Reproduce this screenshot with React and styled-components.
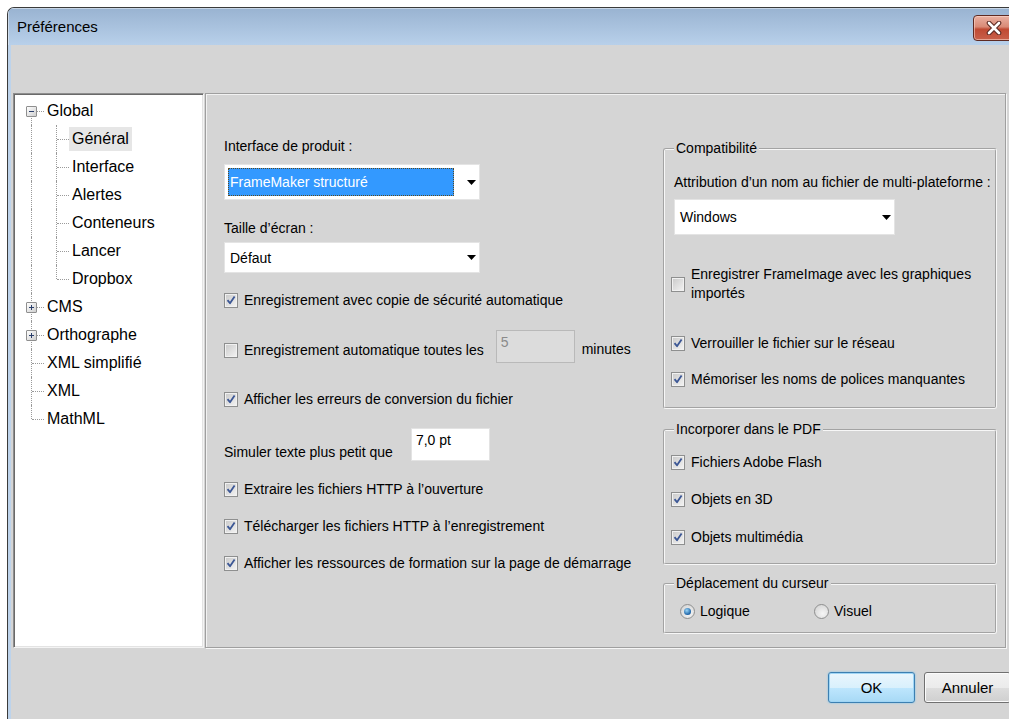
import React from 'react';
import styled, { createGlobalStyle, css } from 'styled-components';

const GlobalStyle = createGlobalStyle`
  html, body {
    margin: 0;
    padding: 0;
    background: #ffffff;
    overflow: hidden;
  }
  body {
    font-family: "Liberation Sans", Arial, sans-serif;
    font-size: 14px;
    color: #000;
  }
`;

const Screen = styled.div`
  width: 1009px;
  height: 719px;
  padding: 7px 0 0 7px;
  box-sizing: border-box;
  overflow: hidden;
`;

const Window = styled.div`
  width: 1016px;
  height: 740px;
  box-sizing: border-box;
  border-top: 1px solid #3b3b3b;
  border-left: 1px solid #3b3b3b;
  border-radius: 7px 0 0 0;
  background: #bdd3eb;
  display: flex;
  flex-direction: column;
  overflow: hidden;
`;

const TitleBar = styled.div`
  height: 37px;
  flex-shrink: 0;
  display: flex;
  align-items: center;
  padding-left: 9px;
  background: linear-gradient(#99b3d1, #b8d0ea);
  box-shadow: inset 1px 1px 0 rgba(255, 255, 255, 0.45);
`;

const Title = styled.div`
  flex: 1;
  font-size: 15px;
  line-height: 18px;
  margin-top: 1px;
  color: #000;
`;

const CloseButton = styled.div`
  width: 42px;
  height: 26px;
  margin: 2px 8px 0 0;
  box-sizing: border-box;
  border: 1px solid #5e2a22;
  border-radius: 4px;
  background: linear-gradient(#eab1a2 0%, #d98a76 45%, #c04a33 55%, #c8604a 100%);
  box-shadow: inset 0 0 0 1px rgba(255, 220, 210, 0.55);
  display: flex;
  align-items: center;
  justify-content: center;
`;

const Client = styled.div`
  flex: 1;
  margin-left: 3px;
  background: #d5d5d5;
  padding: 48px 0 0 2px;
`;

const Content = styled.div`
  width: 998px;
  display: flex;
  flex-direction: column;
`;

const PanelRow = styled.div`
  display: flex;
  gap: 1px;
  height: 555px;
`;

/* ---------- tree ---------- */

const TreePane = styled.div`
  width: 191px;
  box-sizing: border-box;
  background: #fff;
  border: 1px solid;
  border-color: #8e8e8e #f4f4f4 #f4f4f4 #8e8e8e;
  box-shadow: inset 1px 1px 0 #6a6a6a, inset -1px -1px 0 #e3e3e3;
  padding: 3px 0 0 5px;
`;

const TreeRow = styled.div`
  display: flex;
  align-items: center;
  height: 28px;
`;

const Guide = styled.span`
  position: relative;
  width: 25px;
  height: 28px;
  flex-shrink: 0;

  &::before {
    content: '';
    position: absolute;
    left: 12px;
    border-left: 1px dotted #9a9a9a;
    top: ${(p) => (p.$line === 'first' ? '14px' : '0')};
    bottom: ${(p) => (p.$line === 'last' ? '14px' : '0')};
  }

  ${(p) =>
    p.$line !== 'pass' &&
    css`
      &::after {
        content: '';
        position: absolute;
        left: 13px;
        right: 0;
        top: 14px;
        border-top: 1px dotted #9a9a9a;
      }
    `}
`;

const Toggle = styled.span`
  position: absolute;
  left: 7px;
  top: 9px;
  width: 11px;
  height: 11px;
  box-sizing: border-box;
  border: 1px solid #8f8f8f;
  border-radius: 1px;
  background: linear-gradient(135deg, #ffffff, #cfcfcf);
  z-index: 1;
  display: flex;
  align-items: center;
  justify-content: center;
`;

const TreeLabel = styled.span`
  font-size: 16px;
  height: 24px;
  line-height: 24px;
  padding: 0 3px;
  white-space: nowrap;
  background: ${(p) => (p.$selected ? '#e6e6e6' : 'transparent')};
`;

/* ---------- settings panel ---------- */

const SettingsPane = styled.div`
  width: 801px;
  box-sizing: border-box;
  border: 1px solid #9f9f9f;
  box-shadow: inset 1px 1px 0 #f2f2f2, 1px 1px 0 #f6f6f6;
  display: flex;
  padding: 43px 8px 0 18px;
`;

const LeftColumn = styled.div`
  flex: 1;
  display: flex;
  flex-direction: column;
  align-items: flex-start;
`;

const RightColumn = styled.div`
  width: 334px;
  padding-top: 3px;
  display: flex;
  flex-direction: column;
`;

const Text = styled.div`
  line-height: 18px;
  white-space: nowrap;
  margin-top: ${(p) => p.$mt || 0}px;
  margin-left: ${(p) => p.$ml || 0}px;
`;

const Combo = styled.div`
  width: ${(p) => p.$w}px;
  height: ${(p) => p.$h}px;
  margin-top: ${(p) => p.$mt || 0}px;
  margin-left: ${(p) => p.$ml || 0}px;
  box-sizing: border-box;
  background: #fff;
  border: 1px solid #e4e4e4;
  padding: 3px 0 3px 3px;
  display: flex;
  align-items: stretch;
`;

const ComboValue = styled.div`
  flex: 1;
  margin-right: 9px;
  padding-left: 2px;
  display: flex;
  align-items: center;
  box-sizing: border-box;
  ${(p) =>
    p.$active &&
    css`
      background: #3399ff;
      color: #fff;
      outline: 1px dotted #5a4a20;
      outline-offset: -1px;
    `}
`;

const ComboArrow = styled.div`
  width: 16px;
  display: flex;
  align-items: center;
  justify-content: center;
`;

const CheckRow = styled.div`
  display: flex;
  align-items: center;
  min-height: 24px;
  margin-top: ${(p) => p.$mt || 0}px;
  margin-left: ${(p) => p.$ml || 0}px;
`;

const Box = styled.span`
  width: 14px;
  height: 15px;
  flex-shrink: 0;
  box-sizing: border-box;
  border: 1px solid #8e8f8f;
  background: linear-gradient(135deg, #c9c9c9, #f4f4f4);
  box-shadow: inset 0 0 0 1px #f1f1f1;
  display: flex;
  align-items: center;
  justify-content: center;
  margin-right: 6px;
`;

const CheckText = styled.span`
  line-height: 19px;
  white-space: ${(p) => (p.$wrap ? 'normal' : 'nowrap')};
  width: ${(p) => (p.$wrap ? `${p.$wrap}px` : 'auto')};
`;

const FieldBox = styled.div`
  width: ${(p) => p.$w}px;
  height: 33px;
  box-sizing: border-box;
  margin-left: ${(p) => p.$ml || 0}px;
  border: 1px solid ${(p) => (p.$disabled ? '#b9b9b9' : '#e3e3e3')};
  background: ${(p) => (p.$disabled ? '#dcdcdc' : '#fff')};
  color: ${(p) => (p.$disabled ? '#8a8a8a' : '#000')};
  padding: 2px 4px;
  line-height: 18px;
  align-self: flex-start;
  margin-top: ${(p) => p.$mt || 0}px;
`;

const SimRow = styled.div`
  display: flex;
  align-items: flex-end;
  margin-top: ${(p) => p.$mt || 0}px;
`;

const Group = styled.fieldset`
  margin: ${(p) => p.$mt || 0}px 0 0 0;
  padding: 0 9px ${(p) => p.$pb || 0}px 9px;
  min-width: 0;
  border: 2px groove #f7f7f7;
  border-radius: 3px;
  display: flex;
  flex-direction: column;
  align-items: flex-start;
`;

const Legend = styled.legend`
  padding: 0 2px;
  line-height: 17px;
  white-space: nowrap;
`;

const RadioRow = styled.div`
  display: flex;
  align-items: center;
  height: 24px;
  margin: ${(p) => p.$mt || 0}px 0 0 6px;
`;

const RadioOption = styled.label`
  display: flex;
  align-items: center;
  width: ${(p) => p.$w || 'auto'};
`;

const RadioDot = styled.span`
  width: 15px;
  height: 15px;
  box-sizing: border-box;
  border-radius: 50%;
  border: 1px solid #8e8f8f;
  background: radial-gradient(circle at 60% 65%, #f6f6f6, #cfcfcf);
  display: flex;
  align-items: center;
  justify-content: center;
  margin-right: 5px;

  ${(p) =>
    p.$on &&
    css`
      &::after {
        content: '';
        width: 7px;
        height: 7px;
        border-radius: 50%;
        background: radial-gradient(circle at 40% 35%, #9ad6f8, #1b62a6 70%, #1a4b7c);
      }
    `}
`;

/* ---------- footer ---------- */

const Footer = styled.div`
  display: flex;
  justify-content: flex-end;
  gap: 9px;
  margin-top: 24px;
`;

const Button = styled.div`
  width: 87px;
  height: 31px;
  box-sizing: border-box;
  border-radius: 3px;
  display: flex;
  align-items: center;
  justify-content: center;
  font-size: 15px;
  ${(p) =>
    p.$primary
      ? css`
          border: 1px solid #3c7fb1;
          background: linear-gradient(#eaf6fd 0%, #d9f0fc 50%, #bee6fd 51%, #a7d9f5 100%);
          box-shadow: inset 0 0 0 1px #9fd5f5, 0 0 2px #6cc1f2;
        `
      : css`
          border: 1px solid #707070;
          background: linear-gradient(#f2f2f2 0%, #ebebeb 50%, #dddddd 51%, #cfcfcf 100%);
          box-shadow: inset 0 0 0 1px #fbfbfb;
        `}
`;

/* ---------- small drawings ---------- */

const CheckMark = () => (
  <svg width="10" height="10" viewBox="0 0 10 10">
    <path d="M1.5 5.2 L4 8.2 L8.6 1.4" fill="none" stroke="#3c5795" strokeWidth="1.8" strokeLinejoin="round" />
  </svg>
);

const DownArrow = () => (
  <svg width="9" height="5" viewBox="0 0 9 5">
    <path d="M0 0 H9 L4.5 5 Z" fill="#000" />
  </svg>
);

const CloseGlyph = () => (
  <svg width="16" height="14" viewBox="0 0 16 14">
    <path d="M3 2 L13 12 M13 2 L3 12" stroke="#5b2a22" strokeWidth="4.6" strokeLinecap="round" />
    <path d="M3 2 L13 12 M13 2 L3 12" stroke="#ffffff" strokeWidth="2.6" strokeLinecap="round" />
  </svg>
);

const ToggleGlyph = ({ plus }) => (
  <svg width="7" height="7" viewBox="0 0 7 7">
    <path d="M1 3.5 H6" stroke="#2b3f6b" strokeWidth="1" />
    {plus && <path d="M3.5 1 V6" stroke="#2b3f6b" strokeWidth="1" />}
  </svg>
);

const Checkbox = ({ checked, children, wrap, mt, ml }) => (
  <CheckRow $mt={mt} $ml={ml}>
    <Box>{checked && <CheckMark />}</Box>
    <CheckText $wrap={wrap}>{children}</CheckText>
  </CheckRow>
);

/* ---------- data ---------- */

const treeItems = [
  { label: 'Global', guides: ['first'], toggle: 'minus' },
  { label: 'Général', guides: ['pass', 'mid'], selected: true },
  { label: 'Interface', guides: ['pass', 'mid'] },
  { label: 'Alertes', guides: ['pass', 'mid'] },
  { label: 'Conteneurs', guides: ['pass', 'mid'] },
  { label: 'Lancer', guides: ['pass', 'mid'] },
  { label: 'Dropbox', guides: ['pass', 'last'] },
  { label: 'CMS', guides: ['mid'], toggle: 'plus' },
  { label: 'Orthographe', guides: ['mid'], toggle: 'plus' },
  { label: 'XML simplifié', guides: ['mid'] },
  { label: 'XML', guides: ['mid'] },
  { label: 'MathML', guides: ['last'] },
];

export default function App() {
  return (
    <>
      <GlobalStyle />
      <Screen>
        <Window>
          <TitleBar>
            <Title>Préférences</Title>
            <CloseButton>
              <CloseGlyph />
            </CloseButton>
          </TitleBar>
          <Client>
            <Content>
              <PanelRow>
                <TreePane>
                  {treeItems.map((item) => (
                    <TreeRow key={item.label}>
                      {item.guides.map((g, i) => (
                        <Guide key={i} $line={g}>
                          {item.toggle && i === item.guides.length - 1 && (
                            <Toggle>
                              <ToggleGlyph plus={item.toggle === 'plus'} />
                            </Toggle>
                          )}
                        </Guide>
                      ))}
                      <TreeLabel $selected={item.selected}>{item.label}</TreeLabel>
                    </TreeRow>
                  ))}
                </TreePane>

                <SettingsPane>
                  <LeftColumn>
                    <Text>Interface de produit :</Text>
                    <Combo $w={256} $h={36} $mt={9}>
                      <ComboValue $active>FrameMaker structuré</ComboValue>
                      <ComboArrow>
                        <DownArrow />
                      </ComboArrow>
                    </Combo>

                    <Text $mt={19}>Taille d’écran :</Text>
                    <Combo $w={256} $h={31} $mt={5}>
                      <ComboValue>Défaut</ComboValue>
                      <ComboArrow>
                        <DownArrow />
                      </ComboArrow>
                    </Combo>

                    <Checkbox checked mt={15}>
                      Enregistrement avec copie de sécurité automatique
                    </Checkbox>

                    <CheckRow $mt={26}>
                      <Box />
                      <CheckText>Enregistrement automatique toutes les</CheckText>
                      <FieldBox $w={79} $ml={12} $mt={-8} $disabled>
                        5
                      </FieldBox>
                      <Text $ml={7} $mt={-4}>
                        minutes
                      </Text>
                    </CheckRow>

                    <Checkbox checked mt={24}>
                      Afficher les erreurs de conversion du fichier
                    </Checkbox>

                    <SimRow $mt={17}>
                      <Text>Simuler texte plus petit que</Text>
                      <FieldBox $w={79} $ml={18}>
                        7,0 pt
                      </FieldBox>
                    </SimRow>

                    <Checkbox checked mt={16}>
                      Extraire les fichiers HTTP à l’ouverture
                    </Checkbox>
                    <Checkbox checked mt={13}>
                      Télécharger les fichiers HTTP à l’enregistrement
                    </Checkbox>
                    <Checkbox checked mt={13}>
                      Afficher les ressources de formation sur la page de démarrage
                    </Checkbox>
                  </LeftColumn>

                  <RightColumn>
                    <Group $pb={16}>
                      <Legend>Compatibilité</Legend>
                      <Text $mt={16}>Attribution d’un nom au fichier de multi-plateforme :</Text>
                      <Combo $w={221} $h={36} $mt={8}>
                        <ComboValue>Windows</ComboValue>
                        <ComboArrow>
                          <DownArrow />
                        </ComboArrow>
                      </Combo>
                      <Checkbox wrap={300} mt={30} ml={-3}>
                        Enregistrer FrameImage avec les graphiques importés
                      </Checkbox>
                      <Checkbox checked mt={28} ml={-3}>
                        Verrouiller le fichier sur le réseau
                      </Checkbox>
                      <Checkbox checked mt={12} ml={-3}>
                        Mémoriser les noms de polices manquantes
                      </Checkbox>
                    </Group>

                    <Group $mt={12} $pb={14}>
                      <Legend>Incorporer dans le PDF</Legend>
                      <Checkbox checked mt={12} ml={-3}>
                        Fichiers Adobe Flash
                      </Checkbox>
                      <Checkbox checked mt={13} ml={-3}>
                        Objets en 3D
                      </Checkbox>
                      <Checkbox checked mt={14} ml={-3}>
                        Objets multimédia
                      </Checkbox>
                    </Group>

                    <Group $mt={10} $pb={9}>
                      <Legend>Déplacement du curseur</Legend>
                      <RadioRow $mt={7}>
                        <RadioOption $w="134px">
                          <RadioDot $on />
                          Logique
                        </RadioOption>
                        <RadioOption>
                          <RadioDot />
                          Visuel
                        </RadioOption>
                      </RadioRow>
                    </Group>
                  </RightColumn>
                </SettingsPane>
              </PanelRow>

              <Footer>
                <Button $primary>OK</Button>
                <Button>Annuler</Button>
              </Footer>
            </Content>
          </Client>
        </Window>
      </Screen>
    </>
  );
}
